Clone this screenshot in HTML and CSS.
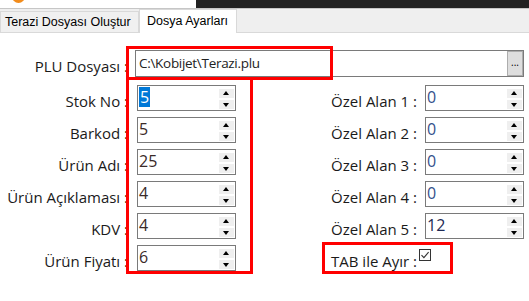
FILE: index.html
```html
<!DOCTYPE html>
<html lang="tr">
<head>
<meta charset="utf-8">
<title>Dosya Ayarları</title>
<link rel="stylesheet" href="styles.css">
</head>
<body>
<div class="app">
  <div class="topbar">
    <div class="topbar-left"><span class="logo"></span></div>
    <div class="topbar-dark"></div>
  </div>
  <div class="tabs">
    <div class="tab">Terazi Dosyası Oluştur</div>
    <div class="tab active">Dosya Ayarları</div>
  </div>
  <div class="content">
    <div class="plu-row">
      <label class="lbl lbl-left">PLU Dosyası :</label>
      <div class="filebox">
        <span class="filepath">C:\Kobijet\Terazi.plu</span>
        <span class="browse">...</span>
      </div>
    </div>
    <div class="grid">
      <label class="lbl lbl-left">Stok No :</label>
      <div class="spin"><span class="val"><span class="sel">5</span></span><span class="btns"><i class="up"></i><i class="down"></i></span></div>
      <label class="lbl lbl-right">Özel Alan 1 :</label>
      <div class="spin spin-r"><span class="val blue">0</span><span class="btns"><i class="up"></i><i class="down"></i></span></div>

      <label class="lbl lbl-left">Barkod :</label>
      <div class="spin"><span class="val">5</span><span class="btns"><i class="up"></i><i class="down"></i></span></div>
      <label class="lbl lbl-right">Özel Alan 2 :</label>
      <div class="spin spin-r"><span class="val blue">0</span><span class="btns"><i class="up"></i><i class="down"></i></span></div>

      <label class="lbl lbl-left">Ürün Adı :</label>
      <div class="spin"><span class="val">25</span><span class="btns"><i class="up"></i><i class="down"></i></span></div>
      <label class="lbl lbl-right">Özel Alan 3 :</label>
      <div class="spin spin-r"><span class="val blue">0</span><span class="btns"><i class="up"></i><i class="down"></i></span></div>

      <label class="lbl lbl-left">Ürün Açıklaması :</label>
      <div class="spin"><span class="val">4</span><span class="btns"><i class="up"></i><i class="down"></i></span></div>
      <label class="lbl lbl-right">Özel Alan 4 :</label>
      <div class="spin spin-r"><span class="val blue">0</span><span class="btns"><i class="up"></i><i class="down"></i></span></div>

      <label class="lbl lbl-left">KDV :</label>
      <div class="spin"><span class="val">4</span><span class="btns"><i class="up"></i><i class="down"></i></span></div>
      <label class="lbl lbl-right">Özel Alan 5 :</label>
      <div class="spin spin-r"><span class="val dark">12</span><span class="btns"><i class="up"></i><i class="down"></i></span></div>

      <label class="lbl lbl-left">Ürün Fiyatı :</label>
      <div class="spin"><span class="val">6</span><span class="btns"><i class="up"></i><i class="down"></i></span></div>
      <label class="lbl lbl-right">TAB ile Ayır :</label>
      <div class="check-cell">
        <svg class="check" width="12" height="12" viewBox="0 0 12 12"><rect x="0.5" y="0.5" width="11" height="11" fill="#fff" stroke="#333"/><path d="M2.5 6.2 L4.9 8.6 L9.6 3.2" fill="none" stroke="#333" stroke-width="1.1"/></svg>
      </div>
    </div>
    <div class="mark mark-plu"></div>
    <div class="mark mark-left"></div>
    <div class="mark mark-tab"></div>
  </div>
</div>
</body>
</html>
```
FILE: styles.css
```css
html, body {
  margin: 0;
  padding: 0;
  background: #fff;
}
.app {
  width: 529px;
  height: 301px;
  overflow: hidden;
  position: relative;
  font-family: "Open Sans", "Noto Sans", sans-serif;
  color: #1a1a1a;
}
.topbar {
  display: flex;
  height: 8px;
}
.topbar-left {
  width: 196px;
  background: #fff;
  position: relative;
  overflow: hidden;
}
.logo {
  position: absolute;
  left: 12px;
  top: -10px;
  width: 13px;
  height: 13px;
  border-radius: 50%;
  background: #f28c1c;
}
.topbar-dark {
  flex: 1;
  background: #222;
}
.tabs {
  display: flex;
  align-items: flex-end;
  height: 23px;
  background: #efefef;
  border-top: 1px solid #c6c6c6;
  border-bottom: 1px solid #d9d9d9;
  font-family: "Liberation Sans", Arial, sans-serif;
  font-size: 12.5px;
  color: #000;
}
.tab {
  height: 21px;
  box-sizing: border-box;
  padding: 3px 4px 0 4px;
  width: 139px;
  border: 1px solid #d9d9d9;
  border-bottom: none;
  background: #f0f0f0;
}
.tab.active {
  height: 24px;
  width: 98px;
  margin-bottom: -1px;
  padding: 4px 0 0 7px;
  background: #fff;
  border-color: #d9d9d9;
}
.content {
  position: relative;
  padding-top: 17px;
  height: 268px;
  box-sizing: border-box;
  font-size: 15px;
}
.plu-row {
  display: flex;
  align-items: stretch;
  height: 27px;
}
.lbl {
  display: block;
  text-align: right;
  white-space: nowrap;
  line-height: 26px;
  padding-top: 3px;
  box-sizing: border-box;
}
.lbl-left {
  width: 128px;
}
.lbl-right {
  width: 181px;
}
.filebox {
  margin-left: 7px;
  width: 389px;
  box-sizing: border-box;
  border: 1px solid #7a7a7a;
  display: flex;
  align-items: center;
  justify-content: space-between;
  padding: 0 0 0 3px;
}
.filepath {
  font-size: 13.5px;
  letter-spacing: -0.3px;
  line-height: 20px;
  margin-top: -2px;
  color: #222;
}
.browse {
  width: 16px;
  height: 25px;
  box-sizing: border-box;
  background: #dedede;
  border: 1px solid #adadad;
  font-size: 10px;
  line-height: 20px;
  text-align: center;
  color: #000;
}
.grid {
  margin-top: 8px;
  display: grid;
  grid-template-columns: 128px 108px 181px 107px;
  column-gap: 0;
  grid-auto-rows: 26px;
  row-gap: 6px;
}
.spin {
  margin-left: 9px;
  width: 99px;
  box-sizing: border-box;
  border: 1px solid #7a7a7a;
  display: flex;
  justify-content: space-between;
}
.spin-r {
  margin-left: 8px;
}
.val {
  padding-left: 1px;
  padding-top: 1px;
  font-size: 16px;
  line-height: 20px;
  color: #3a2a28;
}
.val.blue {
  color: #34518c;
}
.val.dark {
  color: #1e2a55;
}
.sel {
  display: inline-block;
  background: #0078d7;
  color: #fff;
  padding: 0 1px;
  height: 20px;
}
.btns {
  display: flex;
  flex-direction: column;
  justify-content: center;
  gap: 2px;
  padding: 1px 1px 0 0;
}
.btns i {
  display: block;
  width: 15px;
  height: 9px;
  background: #efefef;
  position: relative;
}
.btns i::after {
  content: "";
  position: absolute;
  left: 4px;
  width: 0;
  height: 0;
  border-left: 3.5px solid transparent;
  border-right: 3.5px solid transparent;
}
.btns i.up::after {
  top: 2px;
  border-bottom: 4px solid #000;
}
.btns i.down::after {
  top: 3px;
  border-top: 4px solid #000;
}
.check-cell {
  display: flex;
  align-items: flex-start;
  padding-top: 4px;
  padding-left: 2px;
}
.check {
  display: block;
}
.mark {
  position: absolute;
  border: 3px solid #ff0000;
  box-sizing: border-box;
  pointer-events: none;
}
.mark-plu {
  left: 126px;
  top: 13px;
  width: 207px;
  height: 34px;
}
.mark-left {
  left: 126px;
  top: 44px;
  width: 127px;
  height: 197px;
}
.mark-tab {
  left: 322px;
  top: 209px;
  width: 131px;
  height: 32px;
}
```
